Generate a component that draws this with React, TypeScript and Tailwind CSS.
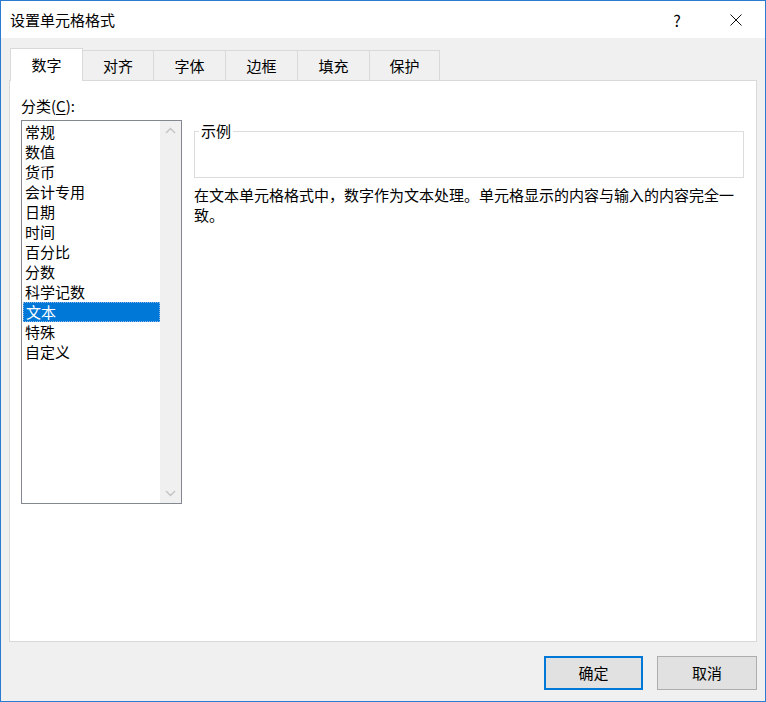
import React from 'react';

const FONT = "font-['Noto_Sans_CJK_SC','Noto_Sans',sans-serif]";

const tabs = [
  { label: '数字', w: 'w-[73px]' },
  { label: '对齐', w: 'w-[72px]' },
  { label: '字体', w: 'w-[73px]' },
  { label: '边框', w: 'w-[73px]' },
  { label: '填充', w: 'w-[73px]' },
  { label: '保护', w: 'w-[71px]' },
];

const categories = ['常规', '数值', '货币', '会计专用', '日期', '时间', '百分比', '分数', '科学记数', '文本', '特殊', '自定义'];

const Chevron = ({ up }: { up?: boolean }) => (
  <svg width="11" height="7" viewBox="0 0 11 7" className="block">
    <path
      d={up ? 'M1 6 L5.5 1.5 L10 6' : 'M1 1 L5.5 5.5 L10 1'}
      fill="none"
      stroke="#c2c2c2"
      strokeWidth="1.3"
    />
  </svg>
);

export default function App() {
  const selected = 0;
  const selectedCategory = 9;

  return (
    <div className={`${FONT} w-[766px] h-[702px] flex flex-col border border-[#2b7bd1] bg-[#f0f0f0] text-[15px] leading-[20px] text-black`}>
      {/* Title bar */}
      <div className="h-[37px] bg-white flex items-center pl-[9px] shrink-0">
        <span className="flex-1 pt-[1px]">设置单元格格式</span>
        <span className="w-[14px] text-center mr-[46px] text-[16px]">?</span>
        <svg width="12" height="12" viewBox="0 0 12 12" className="mr-[23px]">
          <path d="M0.5 0.5 L11.5 11.5 M11.5 0.5 L0.5 11.5" stroke="#111" strokeWidth="1" />
        </svg>
      </div>

      <div className="flex flex-col px-[8px] pt-[10px] flex-1">
        {/* Tabs */}
        <div className="flex items-start h-[33px] ml-[1px]">
          {tabs.map((t, i) =>
            i === selected ? (
              <div
                key={t.label}
                className={`${t.w} h-[33px] relative z-10 bg-white border border-b-0 border-[#d9d9d9] flex items-center justify-center pb-[1px]`}
              >
                {t.label}
              </div>
            ) : (
              <div
                key={t.label}
                className={`${t.w} -ml-px mt-[2px] h-[31px] bg-[#f0f0f0] border border-b-0 border-[#d9d9d9] flex items-center justify-center`}
              >
                {t.label}
              </div>
            )
          )}
        </div>

        {/* Panel */}
        <div className="-mt-px h-[562px] w-[748px] bg-white border border-[#d9d9d9] pt-[15px] pl-[11px] flex flex-col">
          <div className="h-[20px]">
            分类(<span className="underline underline-offset-2">C</span>):
          </div>
          <div className="flex mt-[4px]">
            {/* Category list */}
            <div className="w-[161px] h-[384px] border border-[#828790] flex">
              <div className="flex-1 pt-px pl-px">
                {categories.map((c, i) => (
                  <div
                    key={c}
                    className={
                      i === selectedCategory
                        ? 'h-[20px] pl-[2px] bg-[#0078d7] text-white border border-dotted border-[#8bb8e8] leading-[18px] pl-[1px]'
                        : 'h-[20px] pl-[2px]'
                    }
                  >
                    {c}
                  </div>
                ))}
              </div>
              <div className="w-[21px] bg-[#f0f0f0] flex flex-col items-center justify-between py-[6px]">
                <Chevron up />
                <Chevron />
              </div>
            </div>

            {/* Right column */}
            <div className="ml-[12px] w-[550px]">
              <div className="relative mt-[11px] h-[47px] border border-[#dcdcdc]">
                <span className="absolute left-[4px] -top-[11px] bg-white px-[2px]">示例</span>
              </div>
              <p className="mt-[7px]">
                在文本单元格格式中，数字作为文本处理。单元格显示的内容与输入的内容完全一
                <br />
                致。
              </p>
            </div>
          </div>
        </div>

        {/* Buttons */}
        <div className="flex justify-end gap-[14px] mt-[14px] w-[748px]">
          <button className="w-[99px] h-[34px] bg-[#e1e1e1] border-2 border-[#0078d7] flex items-center justify-center">
            确定
          </button>
          <button className="w-[100px] h-[34px] bg-[#e1e1e1] border border-[#adadad] flex items-center justify-center">
            取消
          </button>
        </div>
      </div>
    </div>
  );
}
